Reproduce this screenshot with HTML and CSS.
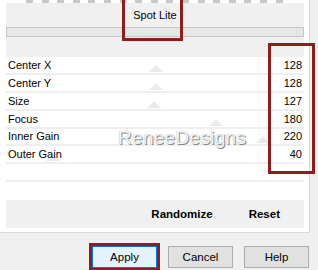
FILE: index.html
```html
<!DOCTYPE html>
<html lang="en">
<head>
  <meta charset="UTF-8">
  <meta name="viewport" content="width=device-width, initial-scale=1.0">
  <title>Spot Lite</title>
  <link rel="stylesheet" href="styles.css">
</head>
<body>
  <div class="sheet">
    <div class="ticks"></div>
    <div class="head">
      <div class="title">Spot Lite</div>
      <div class="bar"></div>
    </div>
    <div class="params">
      <div class="row"><span>Center X</span><span class="val">128</span><i class="thumb" style="left:50.2%"></i></div>
      <div class="row"><span>Center Y</span><span class="val">128</span><i class="thumb" style="left:50.2%"></i></div>
      <div class="row"><span>Size</span><span class="val">127</span><i class="thumb" style="left:49.8%"></i></div>
      <div class="row"><span>Focus</span><span class="val">180</span><i class="thumb" style="left:70.6%"></i></div>
      <div class="row"><span>Inner Gain</span><span class="val">220</span><i class="thumb" style="left:86.3%"></i></div>
      <div class="row"><span>Outer Gain</span><span class="val">40</span><i class="thumb" style="left:15.7%"></i></div>
      <div class="row"></div>
      <div class="row last"></div>
      <div class="mark">ReneeDesigns</div>
    </div>
    <div class="actions">
      <button class="flat">Randomize</button>
      <button class="flat">Reset</button>
    </div>
  </div>
  <div class="buttons">
    <button class="btn default">Apply</button>
    <button class="btn">Cancel</button>
    <button class="btn">Help</button>
  </div>
  <div class="note note-title"></div>
  <div class="note note-values"></div>
  <div class="note note-apply"></div>
</body>
</html>
```

FILE: styles.css
```css
html, body {
  margin: 0;
  padding: 0;
  font-family: "Liberation Sans", Arial, sans-serif;
  font-size: 11px;
  color: #000;
  background: #f0f0f0;
}
body {
  position: relative;
  width: 318px;
  height: 270px;
  overflow: hidden;
}
.sheet {
  width: 298px;
  padding: 0 5px 4px 6px;
  background: #fff;
  border-right: 1px solid #d9d9d9;
  border-bottom: 1px solid #d9d9d9;
}
.ticks {
  height: 3px;
  margin: 0 14px 0 20px;
  background: repeating-linear-gradient(90deg, #c9c9c9 0 7px, transparent 7px 15.6px);
}
.head {
  height: 54px;
  background: #f0f0f0;
  padding-top: 5px;
  box-sizing: border-box;
}
.title {
  text-align: center;
  line-height: 14px;
}
.bar {
  height: 8px;
  margin-top: 5px;
  background: #e6e6e6;
  border: 1px solid #c6c6c6;
}
.params {
  position: relative;
}
.row {
  position: relative;
  height: 17.875px;
  box-sizing: border-box;
  border-bottom: 2px solid #eeeeee;
  display: flex;
  justify-content: space-between;
  align-items: center;
  padding: 0 2px;
}
.row.last {
  border-bottom: none;
}
.row span {
  position: relative;
  z-index: 1;
}
.thumb {
  position: absolute;
  bottom: 1px;
  width: 0;
  height: 0;
  transform: translateX(-50%);
  border-left: 7px solid transparent;
  border-right: 7px solid transparent;
  border-bottom: 7px solid #ebebeb;
}
.mark {
  position: absolute;
  left: 112px;
  top: 70px;
  font-size: 19px;
  color: #f3f3f3;
  letter-spacing: 0.3px;
  text-shadow: 1px 1px 0 #8a8a8a, 0 0 1px #a8a8a8;
}
.actions {
  height: 28px;
  background: #f0f0f0;
  display: flex;
  justify-content: flex-end;
  align-items: center;
  gap: 36px;
  padding-right: 24px;
}
.flat {
  border: none;
  background: none;
  padding: 0;
  font-family: inherit;
  font-size: 11.5px;
  font-weight: bold;
  color: #000;
}
.buttons {
  display: flex;
  justify-content: flex-end;
  gap: 11px;
  padding-right: 9px;
  margin-top: 13px;
}
.btn {
  width: 65px;
  height: 22px;
  padding: 0;
  font-family: inherit;
  font-size: 11.5px;
  color: #000;
  background: #e1e1e1;
  border: 1px solid #adadad;
}
.btn.default {
  background: #e5f1fb;
  border-color: #0078d7;
}
.note {
  position: absolute;
  border: 3px solid #8b1e1e;
  box-sizing: border-box;
}
.note-title {
  left: 122px;
  top: -3px;
  width: 61px;
  height: 44px;
}
.note-values {
  left: 268px;
  top: 43px;
  width: 47px;
  height: 131px;
}
.note-apply {
  left: 89px;
  top: 243px;
  width: 71px;
  height: 28px;
}
```
